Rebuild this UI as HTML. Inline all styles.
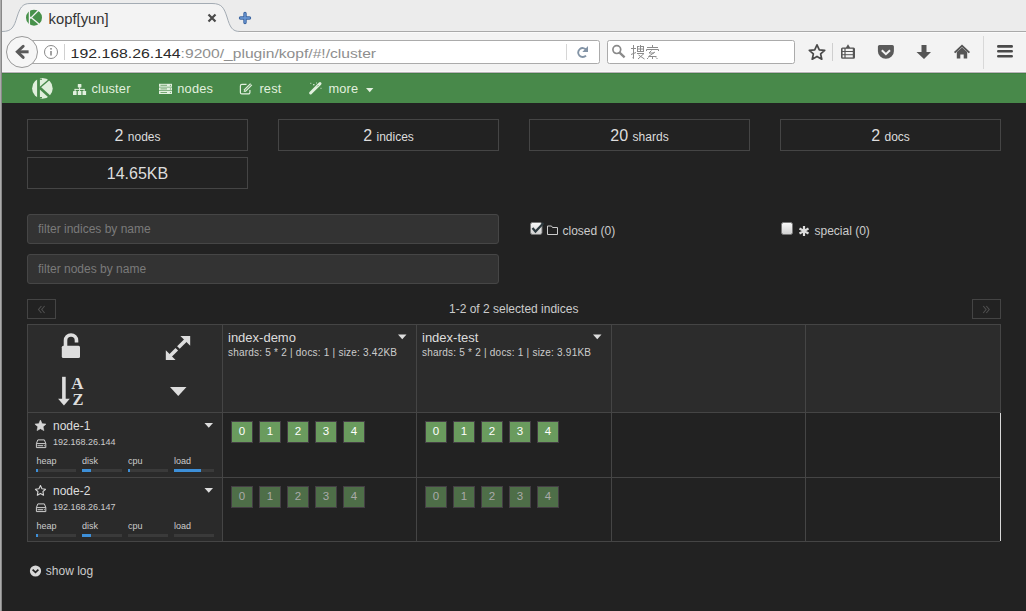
<!DOCTYPE html>
<html><head><meta charset="utf-8">
<style>
*{box-sizing:border-box;margin:0;padding:0}
html,body{width:1026px;height:611px;overflow:hidden;background:#222;font-family:"Liberation Sans",sans-serif;position:relative}
.a{position:absolute}
#lb{position:absolute;left:0;top:0;width:2px;height:611px;background:linear-gradient(90deg,#acacac 0,#acacac 1px,#888 1px,#888 2px);z-index:50}
#chrome{position:absolute;left:0;top:0;width:1026px;height:73px;background:#f3f3f3;border-bottom:1px solid #b9b4b9}
#nav{position:absolute;left:0;top:73px;width:1026px;height:30px;background:#48894a;border-top:1px solid #3f7f42}
.nt{position:absolute;top:7.3px;color:#e2f0df;font-size:12.8px;line-height:15px;white-space:nowrap;letter-spacing:0.2px}
.card{position:absolute;border:1px solid #454545;color:#ddd;text-align:center;height:32px;line-height:31.5px;font-size:16px;white-space:nowrap}
.card small{font-size:12px}
.inp{position:absolute;left:27px;width:472px;height:30px;background:#333;border:1px solid #464646;border-radius:3px;color:#7a7a7a;font-size:12px;line-height:28px;padding-left:10px}
.lbl{position:absolute;color:#ccc;font-size:12px;line-height:14px;white-space:nowrap}
.pgbtn{position:absolute;top:299px;width:29px;height:20px;border:1px solid #444;color:#555;font-size:12px;text-align:center;line-height:17px}
.hl{position:absolute;height:1px;background:#454545}
.vl{position:absolute;width:1px;background:#454545}
.ih{position:absolute;top:330px;color:#ddd;font-size:13px;line-height:15px;white-space:nowrap}
.is{position:absolute;top:346.5px;color:#ccc;font-size:10px;line-height:12px;white-space:nowrap;letter-spacing:0.22px}
.nn{position:absolute;color:#ddd;font-size:12px;line-height:14px}
.ip{position:absolute;color:#ccc;font-size:9px;line-height:10px}
.ml{position:absolute;color:#ccc;font-size:9px;line-height:10px}
.bar{position:absolute;width:40px;height:3px;background:#3a3a3a}
.bar i{position:absolute;left:0;top:0;height:3px;background:#3d8fd8}
.sh{position:absolute;width:22px;height:22px;border:1px solid #443e44;color:#fff;font-size:11.5px;text-align:center;line-height:18.5px}
.p{background:#6a9b5e}
.r{background:#4e6e48;color:#aaa}
</style></head><body>
<div id="lb"></div>
<div id="chrome">
  <svg class="a" style="left:0;top:0" width="1026" height="72" viewBox="0 0 1026 72">
    <rect x="0" y="71" width="1026" height="1" fill="#f9f9f9"/>
    <rect x="0" y="0" width="1026" height="31.5" fill="#ececec"/>
    <path d="M0,32 L2,32 C12,32 14,27 17,17 C20,8 22,3.5 30,3.5 L212,3.5 C222,3.5 224,8 227,17 C230,27 232,32 240,32 L1026,32 L1026,33 L0,33 Z" fill="#f3f3f3"/>
    <path d="M0,31.5 L2,31.5 C12,31.5 14,27 17,17 C20,8 22,3.5 30,3.5 L212,3.5 C222,3.5 224,8 227,17 C230,27 232,31.5 240,31.5" fill="none" stroke="#a3abb3" stroke-width="1"/>
    <rect x="239" y="31" width="787" height="1" fill="#a9a9a9"/>
    <rect x="239" y="32" width="787" height="1" fill="#fafafa"/>
    <!-- favicon -->
    <circle cx="34" cy="17.7" r="8" fill="#47914a"/>
    <path d="M29.4,9 L29.4,27 M31.2,17.6 L38.8,10 M31.4,17.8 L40.5,25.2" stroke="#f3f3f3" stroke-width="1.3" fill="none"/><path d="M29.4,16.3 L32.6,17.7 L29.4,19.2 Z" fill="#f3f3f3"/>
    <text x="48.6" y="23.5" font-family="Liberation Sans" font-size="14.2" fill="#333" textLength="60" lengthAdjust="spacingAndGlyphs">kopf[yun]</text>
    <!-- close -->
    <path d="M208.5,14.5 L215.5,21.5 M215.5,14.5 L208.5,21.5" stroke="#4a4a4a" stroke-width="2.2"/>
    <!-- plus -->
    <path d="M245,13.5 L245,22.5 M240.5,18 L249.5,18" stroke="#3a64a0" stroke-width="3.4" stroke-linecap="round"/>
    <path d="M245,13.5 L245,22.5 M240.5,18 L249.5,18" stroke="#6d9ad6" stroke-width="1.4" stroke-linecap="round"/>
    <!-- url box -->
    <rect x="20.5" y="40.5" width="579" height="23" rx="2" fill="#fff" stroke="#ababab"/>
    <circle cx="22" cy="52" r="15.5" fill="#f6f6f6" stroke="#999"/>
    <path d="M23.2,46.2 L17.3,51.8 L23.2,57.4" stroke="#5a5a5a" stroke-width="2.9" stroke-linecap="round" stroke-linejoin="miter" fill="none"/><path d="M18.5,51.8 H28.6" stroke="#5a5a5a" stroke-width="3"/>
    <circle cx="51" cy="52" r="6.5" fill="none" stroke="#8a8a8a" stroke-width="1"/>
    <rect x="50.2" y="51" width="1.6" height="4.5" fill="#8a8a8a"/><rect x="50.2" y="48" width="1.6" height="1.6" fill="#8a8a8a"/>
    <rect x="64" y="44" width="1" height="16" fill="#d0d0d0"/>
    <text x="70.6" y="57.8" font-family="Liberation Sans" font-size="13.6" fill="#2a2a2a" textLength="110" lengthAdjust="spacingAndGlyphs">192.168.26.144</text><text x="180.6" y="57.8" font-family="Liberation Sans" font-size="13.6" fill="#8e8e8e" textLength="195.5" lengthAdjust="spacingAndGlyphs">:9200/_plugin/kopf/#!/cluster</text>
    <rect x="566" y="44" width="1" height="16" fill="#d6d6d6"/>
    <path d="M586.3,49.9 A4.5,4.5 0 1 0 586,55.6" stroke="#8394a6" stroke-width="1.9" fill="none"/>
    <path d="M588,46.1 L588,51.9 L582.3,51.9 Z" fill="#8394a6"/>
    <!-- search -->
    <rect x="607.5" y="40.5" width="187" height="23" rx="2" fill="#fff" stroke="#ababab"/>
    <circle cx="616.8" cy="49.6" r="3.9" fill="none" stroke="#8a8a8a" stroke-width="1.7"/>
    <path d="M619.6,52.6 L624.6,57.4" stroke="#8a8a8a" stroke-width="2.3"/>
    <g stroke="#8c8c8c" stroke-width="1" fill="none">
      <path d="M631,48.5 h5 M633.5,45 v13.5 l-1,-0.8 M631,54.5 l5,-2"/>
      <path d="M637.5,46 v5.5 M643.5,46 v5.5 M637,46.5 h2.5 M641,46.5 h3 M637,49 h7 M637,51.5 h7 M640.5,45 v7"/>
      <path d="M637,53.5 h7 l-6,5.5 M638.5,55 l6,4"/>
      <path d="M652.5,45 v3 M647,47.5 h11 M646.5,51 v-1.5 h12 v1.5"/>
      <path d="M651.5,50.5 l-2.5,2.5 h5 M655,52 l-6.5,4.5 h8 M652.5,56.5 v2.5 M648.5,57.5 l-1.5,1.5 M656,57.5 l1.5,1.5"/>
    </g>
    <!-- star -->
    <path d="M817,44.8 L819.3,49.8 L824.7,50.3 L820.6,53.9 L821.8,59.2 L817,56.4 L812.2,59.2 L813.4,53.9 L809.3,50.3 L814.7,49.8 Z" fill="none" stroke="#4a4a4a" stroke-width="1.7" stroke-linejoin="round"/>
    <rect x="832" y="43" width="1" height="18" fill="#cfcfcf"/>
    <!-- reading list -->
    <path d="M842.5,47.5 h3.5 l2,-3.2 l2,3.2 h3.5 a1.5,1.5 0 0 1 1.5,1.5 v8.3 a1.5,1.5 0 0 1 -1.5,1.5 h-11 a1.5,1.5 0 0 1 -1.5,-1.5 v-8.3 a1.5,1.5 0 0 1 1.5,-1.5 Z" fill="#555"/>
    <g fill="#f3f3f3"><rect x="842.6" y="48.8" width="1.8" height="2.2"/><rect x="845.6" y="48.8" width="7.2" height="2.2"/><rect x="842.6" y="52" width="1.8" height="2.2"/><rect x="845.6" y="52" width="7.2" height="2.2"/><rect x="842.6" y="55.2" width="1.8" height="2.2"/><rect x="845.6" y="55.2" width="7.2" height="2.2"/></g>
    <!-- pocket -->
    <path d="M879.5,45 h12.8 a1.6,1.6 0 0 1 1.6,1.6 v4.6 a8,7.6 0 0 1 -16,0 v-4.6 a1.6,1.6 0 0 1 1.6,-1.6 Z" fill="#5a5a5a"/>
    <path d="M881.8,50.2 L885.9,54.2 L890,50.2" stroke="#f3f3f3" stroke-width="2" fill="none"/>
    <!-- download -->
    <path d="M921.5,45 h5 v7 h4.5 L924,59 L916.5,52 h5 Z" fill="#555"/>
    <!-- home -->
    <path d="M954.6,52.6 L962,45.8 L969.4,52.6" stroke="#555" stroke-width="1.9" fill="none"/>
    <path d="M956.8,52 L962,47.5 L967.2,52 V58.6 H963.7 V54.5 H960.3 V58.6 H956.8 Z" fill="#555"/>
    <rect x="983" y="36" width="1" height="33" fill="#d8d8d8"/>
    <!-- menu -->
    <path d="M998.3,46.4 h13.4 M998.3,51.3 h13.4 M998.3,56.2 h13.4" stroke="#4a4a4a" stroke-width="2.6" stroke-linecap="round"/>
  </svg>
</div>
<div id="nav">
  <svg class="a" style="left:0;top:-1px" width="400" height="31" viewBox="0 72 400 31">
    <circle cx="42.4" cy="87.4" r="10.3" fill="#e0efdc"/>
    <rect x="37.1" y="76.5" width="2.8" height="22" fill="#48894a"/>
    <path d="M39.5,78.2 h2.5 M39.5,96.6 h2.5" stroke="#48894a" stroke-width="1.1"/>
    <path d="M39.6,86.8 L49,78.8" stroke="#48894a" stroke-width="1.4"/>
    <path d="M39.8,86.8 L50.5,96.5" stroke="#48894a" stroke-width="2.6"/>
    <!-- sitemap -->
    <g fill="#e2f0df">
      <rect x="77.8" y="82.9" width="3.6" height="3.5" rx="0.4"/>
      <rect x="79.1" y="86.3" width="1" height="2"/>
      <rect x="74.6" y="87.9" width="10" height="1"/>
      <rect x="74.6" y="87.9" width="1" height="2.3"/><rect x="79.1" y="87.9" width="1" height="2.3"/><rect x="83.6" y="87.9" width="1" height="2.3"/>
      <rect x="73" y="90.1" width="3.6" height="4" rx="0.4"/><rect x="77.8" y="90.1" width="3.6" height="4" rx="0.4"/><rect x="82.5" y="90.1" width="3.6" height="4" rx="0.4"/>
    </g>
    <!-- nodes (tasks) -->
    <g fill="#e2f0df"><rect x="159" y="82.8" width="13" height="3"/><rect x="159" y="86.4" width="13" height="3"/><rect x="159" y="90" width="13" height="3"/></g>
    <g stroke="#6a9f68" stroke-width="0.9"><path d="M160.5,84.3 h6.5 M160.5,87.9 h6.5 M160.5,91.5 h6.5"/></g>
    <g fill="#6a9f68"><circle cx="170.4" cy="84.3" r="0.6"/><circle cx="170.4" cy="87.9" r="0.6"/><circle cx="170.4" cy="91.5" r="0.6"/></g>
    <!-- edit -->
    <path d="M246.5,83.4 h-4.6 a1.5,1.5 0 0 0 -1.5,1.5 v6.5 a1.5,1.5 0 0 0 1.5,1.5 h6.5 a1.5,1.5 0 0 0 1.5,-1.5 v-2.4" fill="none" stroke="#e2f0df" stroke-width="1.2"/>
    <path d="M244.6,89.9 L251.2,83.3" stroke="#e2f0df" stroke-width="3"/>
    <path d="M244.6,89.9 L251.2,83.3" stroke="#48894a" stroke-width="1"/>
    <path d="M243.6,91 l0.6,-2.2 l1.6,1.6 Z" fill="#e2f0df"/>
    <!-- magic -->
    <path d="M310.6,92 L320,82.6" stroke="#e2f0df" stroke-width="3" stroke-linecap="round"/>
    <path d="M317.2,85.4 L318.4,84.2" stroke="#48894a" stroke-width="0.9"/>
    <path d="M310.3,82.3 h1 M313.2,83.7 h1.2 M313.8,83.1 v1.2 M316,82 h0.9 M320.5,87.3 h1" stroke="#e2f0df" stroke-width="0.9"/>
    <path d="M366,86.9 h7.4 l-3.7,4.3 Z" fill="#e2f0df"/>
  </svg>
  <div class="nt" style="left:91.5px">cluster</div>
  <div class="nt" style="left:177.3px">nodes</div>
  <div class="nt" style="left:259.4px">rest</div>
  <div class="nt" style="left:328.4px">more</div>
</div>

<!-- cards -->
<div class="card" style="left:27px;top:119px;width:221px">2 <small>nodes</small></div>
<div class="card" style="left:278px;top:119px;width:221px">2 <small>indices</small></div>
<div class="card" style="left:529px;top:119px;width:221px">20 <small>shards</small></div>
<div class="card" style="left:780px;top:119px;width:221px">2 <small>docs</small></div>
<div class="card" style="left:27px;top:157px;width:221px">14.65KB</div>

<div class="inp" style="top:214px">filter indices by name</div>
<div class="inp" style="top:254px">filter nodes by name</div>

<!-- checkboxes -->
<svg class="a" style="left:520px;top:215px" width="360" height="30" viewBox="520 215 360 30">
  <defs><linearGradient id="cb" x1="0" y1="0" x2="0" y2="1"><stop offset="0" stop-color="#fafafa"/><stop offset="1" stop-color="#cfcfcf"/></linearGradient></defs>
  <rect x="530.5" y="222.5" width="11.5" height="12" rx="2" fill="url(#cb)" stroke="#777"/>
  <path d="M532.5,228 L535.5,231.5 L543.5,223" stroke="#2d3a3f" stroke-width="2.2" fill="none"/>
  <path d="M547.5,226 h4 l1,1.5 h5 v7 h-10 Z" fill="none" stroke="#ccc" stroke-width="1"/>
  <rect x="781.5" y="222.5" width="11" height="12" rx="2" fill="url(#cb)" stroke="#777"/>
  <path d="M804,226 v10 M799.5,228.5 l9,5 M799.5,233.5 l9,-5" stroke="#ddd" stroke-width="2.2"/>
</svg>
<div class="lbl" style="left:562.5px;top:224px">closed (0)</div>
<div class="lbl" style="left:814.5px;top:224px">special (0)</div>

<div class="pgbtn" style="left:27px"></div>
<div class="pgbtn" style="left:972px"></div>
<svg class="a" style="left:0;top:290px" width="1026" height="30" viewBox="0 290 1026 30">
  <path d="M41.4,306 L38.5,309.5 L41.4,313 M44.6,306 L41.7,309.5 L44.6,313" stroke="#4e4e4e" stroke-width="1.1" fill="none"/>
  <path d="M983.2,306 L986.1,309.5 L983.2,313 M986.3,306 L989.2,309.5 L986.3,313" stroke="#4e4e4e" stroke-width="1.1" fill="none"/>
</svg>
<div class="lbl" style="left:449px;top:302px">1-2 of 2 selected indices</div>

<!-- table -->
<div class="a" style="left:27px;top:324px;width:974px;height:89px;background:#2c2c2c"></div>
<div class="a" style="left:27px;top:413px;width:195px;height:128px;background:#2a2a2a"></div>
<div class="hl" style="left:27px;top:324px;width:974px"></div>
<div class="hl" style="left:27px;top:412px;width:974px"></div>
<div class="hl" style="left:27px;top:477px;width:974px"></div>
<div class="hl" style="left:27px;top:541px;width:973px"></div>
<div class="vl" style="left:27px;top:324px;height:218px"></div>
<div class="vl" style="left:222px;top:324px;height:218px"></div>
<div class="vl" style="left:416px;top:324px;height:218px"></div>
<div class="vl" style="left:611px;top:324px;height:218px"></div>
<div class="vl" style="left:805px;top:324px;height:218px"></div>
<div class="vl" style="left:1000px;top:324px;height:89px"></div>
<div class="vl" style="left:1000px;top:413px;height:128px;background:#d8d8d8"></div>

<svg class="a" style="left:27px;top:324px" width="195" height="88" viewBox="27 324 195 88">
  <!-- unlock -->
  <path d="M65.5,346 v-5.5 a5.5,5.5 0 0 1 11,0 v2" fill="none" stroke="#ddd" stroke-width="3.6"/>
  <rect x="61.8" y="345.8" width="18.2" height="12.3" rx="1.5" fill="#ddd"/>
  <!-- expand -->
  <path d="M180.4,336 h9.8 v9.8 Z" fill="#ddd"/>
  <path d="M186,340 L178.4,347.6" stroke="#ddd" stroke-width="3.6"/>
  <path d="M165.8,350.3 v9.8 h9.8 Z" fill="#ddd"/>
  <path d="M176.8,349.2 L170,356" stroke="#ddd" stroke-width="3.6"/>
  <!-- sort az -->
  <path d="M63.9,376.8 v23" stroke="#ddd" stroke-width="3.6"/>
  <path d="M58.1,398.8 h11.7 l-5.85,6.7 Z" fill="#ddd"/>
  <text x="71.3" y="389.4" font-family="Liberation Serif" font-weight="bold" font-size="17" fill="#ddd">A</text>
  <text x="72.6" y="404.8" font-family="Liberation Serif" font-weight="bold" font-size="16.5" fill="#ddd">Z</text>
  <path d="M170,387 h16.5 l-8.25,9 Z" fill="#ddd"/>
  </svg>

<div class="ih" style="left:228px">index-demo</div>
<div class="is" style="left:228px">shards: 5 * 2 | docs: 1 | size: 3.42KB</div>
<div class="ih" style="left:422px">index-test</div>
<div class="is" style="left:422px">shards: 5 * 2 | docs: 1 | size: 3.91KB</div>
<svg class="a" style="left:0;top:0" width="1026" height="611" viewBox="0 0 1026 611">
  <path d="M398,334.5 h8.5 l-4.25,4.75 Z" fill="#ddd"/>
  <path d="M593,334.5 h8.5 l-4.25,4.75 Z" fill="#ddd"/>
  <path d="M204.5,423 h8.5 l-4.25,4.75 Z" fill="#ddd"/>
  <path d="M204.5,488 h8.5 l-4.25,4.75 Z" fill="#ddd"/>
  <!-- star filled -->
  <path d="M40.45,420.10 L42.07,423.68 L45.97,424.11 L43.07,426.75 L43.86,430.59 L40.45,428.65 L37.04,430.59 L37.83,426.75 L34.93,424.11 L38.83,423.68 Z" fill="#d6d6d6" stroke="#d6d6d6" stroke-width="0.6" stroke-linejoin="round"/>
  <path d="M40.45,485.60 L41.98,488.80 L45.49,489.26 L42.92,491.70 L43.57,495.19 L40.45,493.50 L37.33,495.19 L37.98,491.70 L35.41,489.26 L38.92,488.80 Z" fill="none" stroke="#d6d6d6" stroke-width="1.1" stroke-linejoin="round"/>
  <!-- hdd -->
  <g fill="none" stroke="#cfcfcf" stroke-width="1">
    <path d="M36.4,443.6 L37.8,439.9 h6.6 L45.8,443.6 M36.4,443.6 h9.4 v4 h-9.4 Z"/>
    <path d="M36.4,507.6 L37.8,503.9 h6.6 L45.8,507.6 M36.4,507.6 h9.4 v4 h-9.4 Z"/>
  </g>
  <g fill="#cfcfcf"><rect x="37.5" y="445.2" width="5.5" height="1"/><rect x="43.8" y="445.2" width="1" height="1"/><rect x="37.5" y="509.2" width="5.5" height="1"/><rect x="43.8" y="509.2" width="1" height="1"/></g>
  <!-- show log -->
  <circle cx="35.5" cy="571" r="5.6" fill="#d8d8d8"/>
  <path d="M32.6,569.6 L35.5,572.4 L38.4,569.6" stroke="#222" stroke-width="1.7" fill="none"/>
</svg>

<div class="nn" style="left:53px;top:419px">node-1</div>
<div class="ip" style="left:53px;top:437px">192.168.26.144</div>
<div class="ml" style="left:36.5px;top:456px">heap</div>
<div class="ml" style="left:82px;top:456px">disk</div>
<div class="ml" style="left:128px;top:456px">cpu</div>
<div class="ml" style="left:174px;top:456px">load</div>
<div class="bar" style="left:36px;top:469px"><i style="width:2px"></i></div>
<div class="bar" style="left:82px;top:469px"><i style="width:9px"></i></div>
<div class="bar" style="left:128px;top:469px"><i style="width:2px"></i></div>
<div class="bar" style="left:174px;top:469px"><i style="width:27px"></i></div>

<div class="nn" style="left:53px;top:484px">node-2</div>
<div class="ip" style="left:53px;top:502px">192.168.26.147</div>
<div class="ml" style="left:36.5px;top:521px">heap</div>
<div class="ml" style="left:82px;top:521px">disk</div>
<div class="ml" style="left:128px;top:521px">cpu</div>
<div class="ml" style="left:174px;top:521px">load</div>
<div class="bar" style="left:36px;top:534px"><i style="width:2px"></i></div>
<div class="bar" style="left:82px;top:534px"><i style="width:9px"></i></div>
<div class="bar" style="left:128px;top:534px"><i style="width:0px"></i></div>
<div class="bar" style="left:174px;top:534px"><i style="width:0px"></i></div>

<!-- shards -->
<div class="sh p" style="left:231px;top:421px">0</div>
<div class="sh p" style="left:259px;top:421px">1</div>
<div class="sh p" style="left:287px;top:421px">2</div>
<div class="sh p" style="left:315px;top:421px">3</div>
<div class="sh p" style="left:343px;top:421px">4</div>
<div class="sh p" style="left:425px;top:421px">0</div>
<div class="sh p" style="left:453px;top:421px">1</div>
<div class="sh p" style="left:481px;top:421px">2</div>
<div class="sh p" style="left:509px;top:421px">3</div>
<div class="sh p" style="left:537px;top:421px">4</div>
<div class="sh r" style="left:231px;top:486px">0</div>
<div class="sh r" style="left:259px;top:486px">1</div>
<div class="sh r" style="left:287px;top:486px">2</div>
<div class="sh r" style="left:315px;top:486px">3</div>
<div class="sh r" style="left:343px;top:486px">4</div>
<div class="sh r" style="left:425px;top:486px">0</div>
<div class="sh r" style="left:453px;top:486px">1</div>
<div class="sh r" style="left:481px;top:486px">2</div>
<div class="sh r" style="left:509px;top:486px">3</div>
<div class="sh r" style="left:537px;top:486px">4</div>

<div class="lbl" style="left:45.8px;top:564px;color:#ccc">show log</div>
</body></html>
